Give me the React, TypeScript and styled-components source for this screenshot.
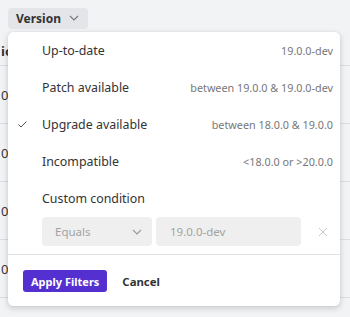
import styled, { createGlobalStyle } from 'styled-components';

const GlobalStyle = createGlobalStyle`
  html, body {
    margin: 0;
    padding: 0;
    background: #f2f3f5;
    font-family: "Noto Sans", "Open Sans", sans-serif;
    overflow: hidden;
  }
`;

const Page = styled.div`
  position: relative;
  width: 350px;
  height: 317px;
  overflow: hidden;
`;

const Toolbar = styled.div`
  display: flex;
  align-items: center;
  gap: 6px;
  height: 36px;
  padding-left: 8px;
`;

const FilterButton = styled.button`
  display: flex;
  align-items: center;
  gap: 8px;
  height: 21px;
  padding: 0 9px 0 8px;
  border: none;
  border-radius: 4px;
  background: #e3e5e9;
  color: #333;
  font-family: inherit;
  font-size: 12px;
  font-weight: 700;
`;

const Table = styled.div`
  display: flex;
  flex-direction: column;
`;

const TableRow = styled.div<{ $header?: boolean }>`
  height: ${(p) => (p.$header ? 29 : 57)}px;
  border-bottom: 1px solid #dcdde0;
  display: flex;
  align-items: center;
  font-size: 13px;
  font-weight: ${(p) => (p.$header ? 700 : 400)};
  color: #333;
  padding-left: 1px;
`;

const Popover = styled.div`
  position: absolute;
  left: 8px;
  top: 32px;
  width: 332px;
  background: #fff;
  border-radius: 5px;
  box-shadow: 0 2px 6px rgba(0, 0, 0, 0.18), 0 0 1px rgba(0, 0, 0, 0.15);
  display: flex;
  flex-direction: column;
`;

const Options = styled.div`
  display: flex;
  flex-direction: column;
`;

const Option = styled.div`
  display: flex;
  align-items: center;
  height: 37px;
  padding-right: 7px;
`;

const Check = styled.span`
  flex: 0 0 34px;
  display: flex;
  justify-content: flex-end;
  padding-right: 15px;
  box-sizing: border-box;
`;

const Label = styled.span`
  flex: 1;
  font-size: 12.4px;
  color: #333;
`;

const Range = styled.span`
  font-size: 10.8px;
  color: #777;
`;

const ConditionRow = styled.div`
  display: flex;
  align-items: center;
  gap: 4px;
  padding: 0 0 8px 34px;
`;

const Select = styled.div`
  width: 110px;
  height: 29px;
  box-sizing: border-box;
  padding: 0 10px 0 13px;
  border-radius: 4px;
  background: #efefef;
  color: #a3a3a3;
  font-size: 11.5px;
  display: flex;
  align-items: center;
  justify-content: space-between;
`;

const Input = styled.div`
  width: 145px;
  height: 29px;
  box-sizing: border-box;
  padding-left: 14px;
  border-radius: 4px;
  background: #efefef;
  color: #a3a3a3;
  font-size: 11.5px;
  display: flex;
  align-items: center;
`;

const ClearButton = styled.span`
  display: flex;
  margin-left: 13px;
`;

const Footer = styled.div`
  border-top: 1px solid #e3e3e3;
  display: flex;
  align-items: center;
  gap: 15px;
  padding: 15px 15px 14px;
`;

const PrimaryButton = styled.button`
  height: 22px;
  padding: 0 8px;
  border: none;
  border-radius: 3px;
  background: #5530d0;
  color: #fff;
  font-family: inherit;
  font-size: 11px;
  font-weight: 700;
`;

const TextButton = styled.button`
  border: none;
  background: none;
  padding: 0;
  color: #333;
  font-family: inherit;
  font-size: 11.4px;
  font-weight: 700;
`;

const Chevron = ({ color = '#888' }: { color?: string }) => (
  <svg width="10" height="6" viewBox="0 0 10 6" fill="none">
    <path d="M1 1l4 4 4-4" stroke={color} strokeWidth="1.1" />
  </svg>
);

const options = [
  { label: 'Up-to-date', range: '19.0.0-dev', checked: false },
  { label: 'Patch available', range: 'between 19.0.0 & 19.0.0-dev', checked: false },
  { label: 'Upgrade available', range: 'between 18.0.0 & 19.0.0', checked: true },
  { label: 'Incompatible', range: '<18.0.0 or >20.0.0', checked: false },
  { label: 'Custom condition', range: '', checked: false },
];

export default function App() {
  return (
    <Page>
      <GlobalStyle />
      <Toolbar>
        <FilterButton>
          Version <Chevron color="#777" />
        </FilterButton>
      </Toolbar>
      <Table>
        <TableRow $header>io</TableRow>
        <TableRow>0</TableRow>
        <TableRow>0</TableRow>
        <TableRow>0</TableRow>
        <TableRow>0-</TableRow>
      </Table>
      <Popover>
        <Options>
          {options.map((o) => (
            <Option key={o.label}>
              <Check>
                {o.checked && (
                  <svg width="9" height="7" viewBox="0 0 9 7" fill="none">
                    <path d="M0.5 3.5l2.5 2.5 5.5-5.5" stroke="#555" strokeWidth="1" />
                  </svg>
                )}
              </Check>
              <Label>{o.label}</Label>
              <Range>{o.range}</Range>
            </Option>
          ))}
        </Options>
        <ConditionRow>
          <Select>
            Equals <Chevron color="#999" />
          </Select>
          <Input>19.0.0-dev</Input>
          <ClearButton>
            <svg width="10" height="10" viewBox="0 0 10 10" fill="none">
              <path d="M1 1l8 8M9 1l-8 8" stroke="#c8c8c8" strokeWidth="1" />
            </svg>
          </ClearButton>
        </ConditionRow>
        <Footer>
          <PrimaryButton>Apply Filters</PrimaryButton>
          <TextButton>Cancel</TextButton>
        </Footer>
      </Popover>
    </Page>
  );
}
